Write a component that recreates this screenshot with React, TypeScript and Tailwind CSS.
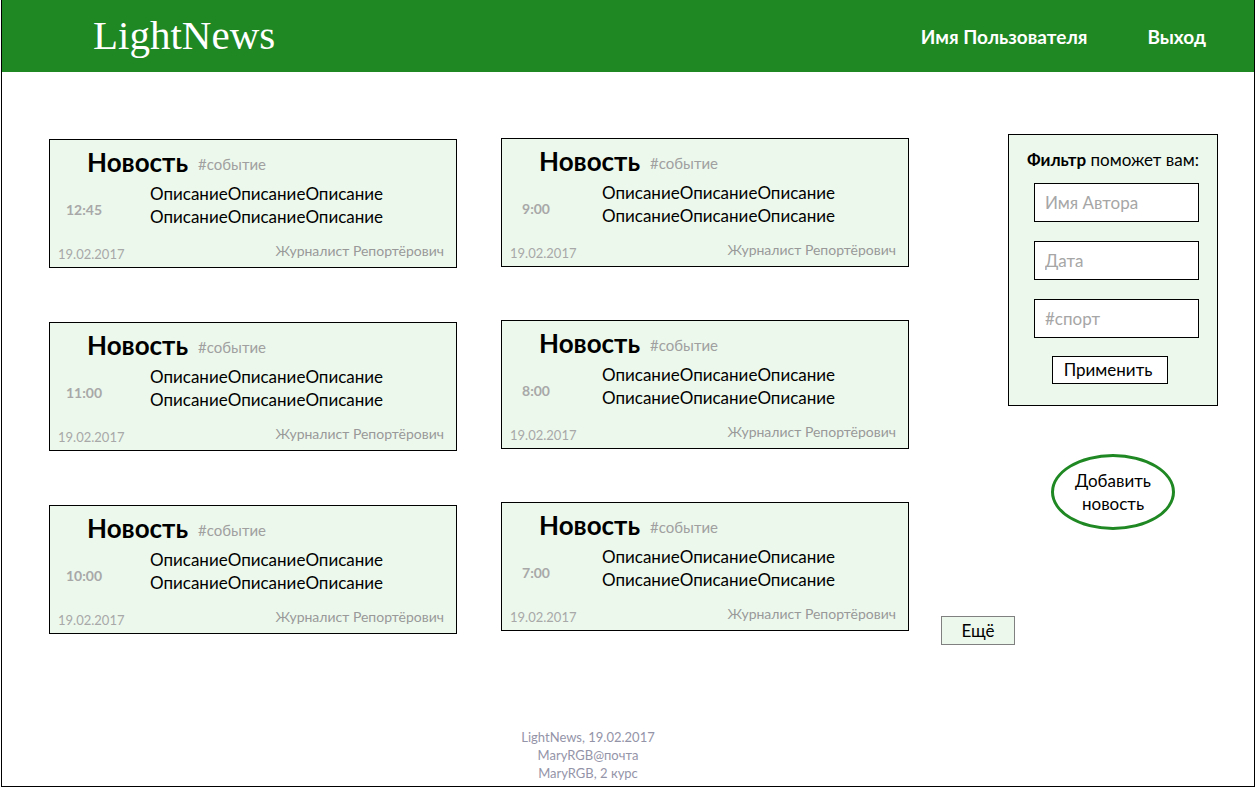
type News = { time: string; date: string };

const morning: News[] = [
  { time: "12:45", date: "19.02.2017" },
  { time: "11:00", date: "19.02.2017" },
  { time: "10:00", date: "19.02.2017" },
];

const early: News[] = [
  { time: "9:00", date: "19.02.2017" },
  { time: "8:00", date: "19.02.2017" },
  { time: "7:00", date: "19.02.2017" },
];

const filters = [
  { id: "author", placeholder: "Имя Автора" },
  { id: "date", placeholder: "Дата" },
  { id: "tag", placeholder: "#спорт" },
];

function NewsCard({ time, date }: News) {
  return (
    <article className="flex h-[129px] flex-col border border-black bg-[#ecf8ec] pt-[7px] pr-3 pb-1 pl-2">
      <header className="flex items-center gap-[10px] pl-[29px]">
        <h2 className="text-[26px] leading-[30px] font-bold">Новость</h2>
        <a href="#event" className="pt-1 text-[15px] leading-[20px] text-[#a0a0a0]">
          #событие
        </a>
      </header>
      <div className="mt-[5px] flex items-center">
        <time className="w-[52px] pt-2 text-center text-[14px] font-bold text-[#a8a8a8]">{time}</time>
        <p className="ml-10 text-[17px] leading-[23px]">
          ОписаниеОписаниеОписание
          <br />
          ОписаниеОписаниеОписание
        </p>
      </div>
      <footer className="mt-auto flex items-end justify-between leading-[20px]">
        <time className="text-[13px] leading-[18px] text-[#a8a8a8]">{date}</time>
        <span className="pb-[2px] text-[14px] text-[#999999]">Журналист Репортёрович</span>
      </footer>
    </article>
  );
}

export default function App() {
  return (
    <div className="ml-px flex min-h-screen flex-col border-x border-b border-black bg-white font-['Lato','Open_Sans',sans-serif] text-black">
      <header className="flex h-[72px] items-center justify-between bg-[#1f8823] pr-12 pl-[91px] text-white">
        <h1 className="pb-[2px] font-['Liberation_Serif',serif] text-[41px] leading-[48px]">LightNews</h1>
        <nav className="flex gap-[60px] pt-[2px] text-[19px] leading-[24px] font-bold">
          <a href="#user">Имя Пользователя</a>
          <a href="#logout">Выход</a>
        </nav>
      </header>

      <main className="flex gap-8 pt-[62px] pr-9 pl-[47px]">
        <div className="flex min-w-0 flex-1 gap-11">
          <section className="flex flex-1 flex-col gap-[54px] pt-[5px]">
            {morning.map((n) => (
              <NewsCard key={n.time} {...n} />
            ))}
          </section>
          <section className="flex flex-1 flex-col gap-[53px] pt-1">
            {early.map((n) => (
              <NewsCard key={n.time} {...n} />
            ))}
          </section>
        </div>

        <aside className="flex w-[277px] shrink-0 flex-col text-[17px]">
          <div className="flex w-[210px] flex-col items-center self-end">
            <form className="flex h-[272px] w-full flex-col border border-black bg-[#ecf8ec] pt-[13px]">
              <p className="pl-[18px] leading-[24px]">
                <b>Фильтр</b> поможет вам:
              </p>
              <div className="mt-[11px] ml-[25px] flex flex-col gap-[19px]">
                {filters.map((f) => (
                  <input
                    key={f.id}
                    id={f.id}
                    aria-label={f.placeholder}
                    placeholder={f.placeholder}
                    className="h-[39px] w-[165px] border border-black bg-white px-[10px] placeholder:text-[#a6a6a6]"
                  />
                ))}
              </div>
              <button
                type="button"
                className="mt-[18px] ml-[43px] h-7 w-[116px] border border-black bg-white pr-1 leading-[24px]"
              >
                Применить
              </button>
            </form>
            <button
              type="button"
              className="mt-12 h-[76px] w-[124px] rounded-[50%] border-3 border-[#1f8823] leading-[23px]"
            >
              Добавить
              <br />
              новость
            </button>
          </div>
          <button
            type="button"
            className="mt-[86px] h-[29px] w-[74px] self-start border border-[#808080] bg-[#ecf8ec] leading-[24px]"
          >
            Ещё
          </button>
        </aside>
      </main>

      <footer className="mt-auto flex flex-col items-center pr-[80px] pb-1 text-[13px] leading-[18px] text-[#9494a8]">
        <p>LightNews, 19.02.2017</p>
        <p>MaryRGB@почта</p>
        <p>MaryRGB, 2 курс</p>
      </footer>
    </div>
  );
}
